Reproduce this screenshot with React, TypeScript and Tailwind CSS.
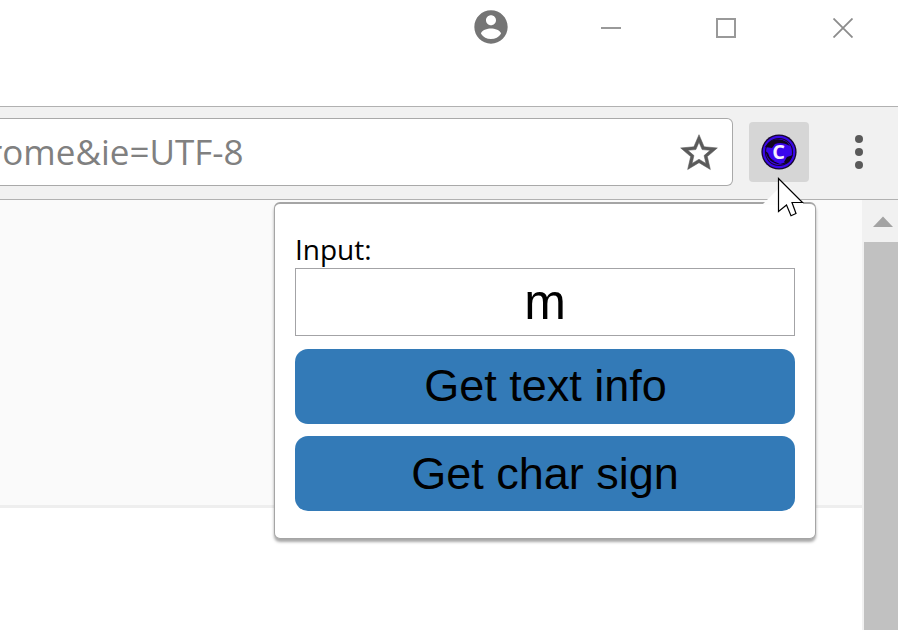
import React from 'react';

function TitleBar() {
  return (
    <div className="flex h-[106px] items-start bg-white">
      <svg className="ml-[471px] mt-[7px] shrink-0" width="40" height="40" viewBox="0 0 24 24" fill="#757575">
        <path d="M12 2C6.48 2 2 6.48 2 12s4.48 10 10 10 10-4.48 10-10S17.52 2 12 2zm0 3c1.66 0 3 1.34 3 3s-1.34 3-3 3-3-1.34-3-3 1.34-3 3-3zm0 14.2c-2.5 0-4.71-1.28-6-3.22.03-1.99 4-3.08 6-3.08 1.99 0 5.97 1.09 6 3.08-1.29 1.94-3.5 3.22-6 3.22z" />
      </svg>
      <div className="ml-[90px] mt-[27px] h-[2px] w-[20px] shrink-0 bg-[#999999]" />
      <div className="ml-[95px] mt-[18px] size-[20px] shrink-0 border-2 border-[#999999]" />
      <svg className="ml-[97px] mt-[18px] shrink-0" width="20" height="20" stroke="#8c8c8c" strokeWidth="1.8">
        <path d="M0.5 0.5L19.5 19.5M19.5 0.5L0.5 19.5" />
      </svg>
    </div>
  );
}

function ExtensionIcon() {
  return (
    <svg width="36" height="36" viewBox="0 0 36 36">
      <circle cx="18" cy="18" r="17.6" fill="#17062f" />
      <circle cx="18" cy="18" r="15.2" fill="none" stroke="#3a08e6" strokeWidth="2.2" />
      <circle cx="18" cy="18" r="13" fill="#3b06ec" />
      <path d="M7 9Q16 2 26 8L29 12Q21 7 14 10L11 14L4 13Z" fill="#10041f" />
      <path d="M4.5 17L7 19Q9 27 18 28.5L29 22L31 23L27 29L21 30.5Q7 30 4.5 17Z" fill="#10041f" />
      <path d="M10 26Q20 30 26 22L31 20Q28 28 19 30Z" fill="#3b06ec" />
      <path d="M23 28L26 23L32 21L28 28Z" fill="#10041f" />
      <text x="17.5" y="25.3" textAnchor="middle" fill="#f5efff" fontFamily="'Open Sans', sans-serif" fontSize="20" fontWeight="700">C</text>
    </svg>
  );
}

function Toolbar() {
  return (
    <div className="flex h-[94px] items-start border-y border-[#b1b1b1] bg-[#f1f1f1]">
      <div className="mt-[11px] flex h-[68px] w-[732.5px] shrink-0 items-center justify-between overflow-hidden rounded-r-[6px] border border-l-0 border-[#a9a9a9] bg-white">
        <span className="-ml-[12px] whitespace-nowrap font-['Open_Sans',sans-serif] text-[35px] leading-[48px] text-[#808080]">rome&amp;ie=UTF-8</span>
        <svg className="mr-[10.5px] mt-px shrink-0" width="44" height="44" viewBox="0 0 24 24" fill="#5a5a5a" stroke="#5a5a5a" strokeWidth="0.3">
          <path d="M22 9.24l-7.19-.62L12 2 9.19 8.63 2 9.24l5.46 4.73L5.82 21 12 17.27 18.18 21l-1.63-7.03L22 9.24zM12 15.4l-3.76 2.27 1-4.28-3.32-2.88 4.38-.38L12 6.1l1.71 4.04 4.38.38-3.32 2.88 1 4.28L12 15.4z" />
        </svg>
      </div>
      <div className="ml-[16.5px] mt-[15px] flex size-[60px] shrink-0 items-center justify-center rounded-[4px] bg-[#d6d6d6]">
        <ExtensionIcon />
      </div>
      <div className="ml-[46px] mt-[28px] flex flex-col gap-[5px]">
        <div className="size-[8px] rounded-full bg-[#5a5a5a]" />
        <div className="size-[8px] rounded-full bg-[#5a5a5a]" />
        <div className="size-[8px] rounded-full bg-[#5a5a5a]" />
      </div>
    </div>
  );
}

function Popup() {
  return (
    <div className="absolute left-[274px] top-[202px] flex h-[337px] w-[542px] flex-col rounded-[6px] border border-t-2 border-[#a5a5a5] bg-white px-[20px] pt-[25px] shadow-[0_3px_3px_rgba(0,0,0,0.35)]">
      <label className="h-[39px] whitespace-nowrap font-['Open_Sans',sans-serif] text-[28px] leading-[41px] text-black">Input:</label>
      <div className="flex h-[68px] shrink-0 items-center justify-center border border-[#a3a3a6] font-['Liberation_Sans',Arial,sans-serif] text-[50px] leading-[68px] text-black">m</div>
      <button className="mt-[13px] h-[75px] shrink-0 rounded-[13px] bg-[#337ab7] pb-[2px] pl-px font-['Liberation_Sans',Arial,sans-serif] text-[45px] leading-[73px] text-black">Get text info</button>
      <button className="mt-[12px] h-[75px] shrink-0 rounded-[13px] bg-[#337ab7] font-['Liberation_Sans',Arial,sans-serif] text-[45px] leading-[75px] text-black">Get char sign</button>
    </div>
  );
}

export default function App() {
  return (
    <div className="relative flex h-[630px] w-[898px] flex-col overflow-hidden bg-white">
      <TitleBar />
      <Toolbar />
      <div className="flex flex-1">
        <div className="flex flex-1 flex-col bg-white">
          <div className="h-[308px] border-b-[3px] border-[#eeeeee] bg-[#fafafa]" />
        </div>
        <div className="flex w-[36px] flex-col bg-[#f1f1f1] pl-[2px]">
          <svg width="34" height="42" fill="#a3a3a3">
            <path d="M9 27L19 16.5L29 27Z" />
          </svg>
          <div className="flex-1 bg-[#c1c1c1]" />
        </div>
      </div>
      <Popup />
      <svg className="absolute left-[756px] top-[172px]" width="54" height="50">
        <path d="M7 32L29 10L47 30V33H7Z" fill="#fdfdfd" />
        <path d="M22.5 6.5L46.5 30.5H36L40 41.5L35 43.7L30.5 33L22.5 39.5Z" fill="white" stroke="black" strokeWidth="1.2" />
      </svg>
    </div>
  );
}
